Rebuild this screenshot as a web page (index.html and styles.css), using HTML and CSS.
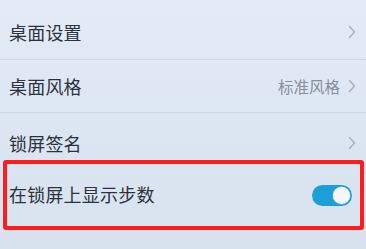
FILE: index.html
```html
<!DOCTYPE html>
<html lang="zh-CN">
<head>
<meta charset="utf-8">
<link rel="stylesheet" href="styles.css">
</head>
<body>
<div class="list">
  <div class="row r1">
    <span class="label">桌面设置</span>
    <span class="right"><svg class="chev" viewBox="0 0 8 14" width="8" height="14"><polyline points="1.5,1.5 6.5,7 1.5,12.5"/></svg></span>
  </div>
  <div class="row r2">
    <span class="label">桌面风格</span>
    <span class="right"><span class="value">标准风格</span><svg class="chev" viewBox="0 0 8 14" width="8" height="14"><polyline points="1.5,1.5 6.5,7 1.5,12.5"/></svg></span>
  </div>
  <div class="row r3">
    <span class="label">锁屏签名</span>
    <span class="right"><svg class="chev" viewBox="0 0 8 14" width="8" height="14"><polyline points="1.5,1.5 6.5,7 1.5,12.5"/></svg></span>
  </div>
  <div class="row r4">
    <span class="label">在锁屏上显示步数</span>
    <span class="right"><span class="toggle"><span class="knob"></span></span></span>
  </div>
</div>
<div class="highlight"></div>
</body>
</html>
```
FILE: styles.css
```css
html, body {
  margin: 0;
  padding: 0;
}
body {
  width: 366px;
  height: 249px;
  overflow: hidden;
  background: linear-gradient(180deg, #e3ebf6 0%, #dbe5f2 60%, #d9e3f0 100%);
  font-family: "Noto Sans CJK SC", "Noto Sans", sans-serif;
  position: relative;
}
.list {
  display: flex;
  flex-direction: column;
  padding-top: 5px;
}
.row {
  display: flex;
  align-items: center;
  justify-content: space-between;
  padding: 0 10px 0 9px;
  border-bottom: 1px solid #ccd6e3;
}
.r1 { height: 54px; }
.r2 { height: 52px; }
.r3 { height: 60px; border-bottom-color: transparent; }
.r4 { height: 40px; border-bottom: none; padding-right: 14px; }
.label {
  font-size: 18px;
  color: #2c323b;
  letter-spacing: 0.2px;
}
.right {
  display: flex;
  align-items: center;
  gap: 8px;
}
.value {
  font-size: 15.5px;
  color: #878f9a;
}
.chev polyline {
  fill: none;
  stroke: #a7afba;
  stroke-width: 1.4;
  stroke-linecap: round;
  stroke-linejoin: round;
}
.toggle {
  width: 40px;
  height: 21px;
  border-radius: 11px;
  background: #1c9fd6;
  display: flex;
  align-items: center;
  justify-content: flex-end;
  padding: 0 2px;
  box-sizing: border-box;
  margin-top: 3px;
}
.knob {
  width: 17px;
  height: 17px;
  border-radius: 50%;
  background: #f4f8fc;
  box-shadow: 0 0 0 0.5px #8fc6e4;
}
.highlight {
  position: absolute;
  left: 3px;
  top: 160px;
  width: 353px;
  height: 62px;
  border: 4px solid #ff1c1c;
  border-radius: 3px;
}
```
